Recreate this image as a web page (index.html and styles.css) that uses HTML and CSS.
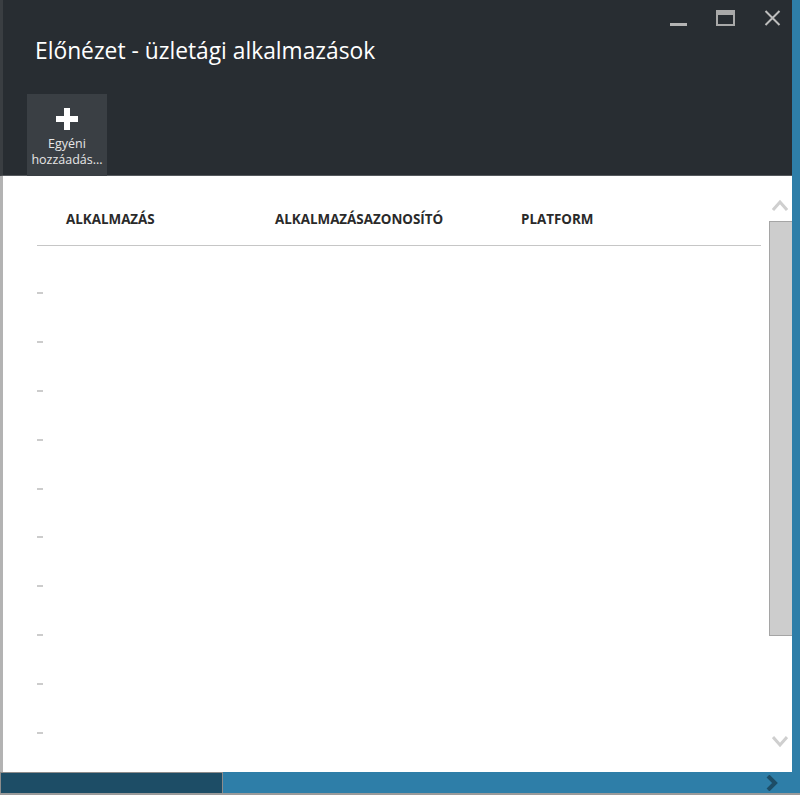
FILE: index.html
```html
<!DOCTYPE html>
<html lang="hu">
<head>
<meta charset="utf-8">
<title>Előnézet - üzletági alkalmazások</title>
<link rel="stylesheet" href="styles.css">
</head>
<body>
<div class="screen">
  <div class="main">
    <div class="window">
      <header class="header">
        <div class="controls">
          <span class="ctl ctl-min"></span>
          <span class="ctl ctl-max"></span>
          <svg class="ctl ctl-close" width="17" height="16" viewBox="0 0 17 16"><path d="M1.5 1 L15.5 15 M15.5 1 L1.5 15" stroke="#bdbdbd" stroke-width="2"/></svg>
        </div>
        <h1 class="title">Előnézet - üzletági alkalmazások</h1>
        <div class="toolbar">
          <button class="tool-btn">
            <svg class="plus" width="22" height="22" viewBox="0 0 22 22"><path d="M8 0h6v8h8v6h-8v8h-6v-8h-8v-6h8z" fill="#ffffff"/></svg>
            <span class="tool-label"><span class="line">Egyéni</span><span class="line">hozzáadás...</span></span>
          </button>
        </div>
      </header>
      <section class="content">
        <div class="table">
          <div class="thead">
            <div class="th th-app">ALKALMAZÁS</div>
            <div class="th th-id">ALKALMAZÁSAZONOSÍTÓ</div>
            <div class="th th-plat">PLATFORM</div>
          </div>
          <div class="rows">
            <div class="row"><span class="dash"></span></div>
            <div class="row"><span class="dash"></span></div>
            <div class="row"><span class="dash"></span></div>
            <div class="row"><span class="dash"></span></div>
            <div class="row"><span class="dash"></span></div>
            <div class="row"><span class="dash"></span></div>
            <div class="row"><span class="dash"></span></div>
            <div class="row"><span class="dash"></span></div>
            <div class="row"><span class="dash"></span></div>
            <div class="row"><span class="dash"></span></div>
          </div>
        </div>
        <div class="scrollbar">
          <svg class="arrow" width="16" height="12" viewBox="0 0 16 12"><path d="M1 11 L8 3 L15 11" fill="none" stroke="#cfcfcf" stroke-width="3"/></svg>
          <div class="thumb"></div>
          <svg class="arrow arrow-down" width="16" height="12" viewBox="0 0 16 12"><path d="M1 1 L8 9 L15 1" fill="none" stroke="#cfcfcf" stroke-width="3"/></svg>
        </div>
      </section>
    </div>
    <div class="side-blue"></div>
  </div>
  <footer class="taskbar">
    <div class="task-dark"></div>
    <div class="task-light">
      <svg class="next" width="12" height="16" viewBox="0 0 12 16"><path d="M2 1 L9 8 L2 15" fill="none" stroke="#1d4d66" stroke-width="4"/></svg>
    </div>
  </footer>
</div>
</body>
</html>
```
FILE: styles.css
```css
html, body {
  margin: 0;
  padding: 0;
}
body {
  width: 800px;
  height: 795px;
  overflow: hidden;
  background: #2e7ea8;
  font-family: "Open Sans", "Noto Sans", "Liberation Sans", sans-serif;
}
.screen {
  display: flex;
  flex-direction: column;
  width: 800px;
  height: 795px;
}
.main {
  display: flex;
  height: 772px;
}
.window {
  width: 792px;
  display: flex;
  flex-direction: column;
}
.side-blue {
  flex: 1;
  background: #2e7ea8;
}
.header {
  height: 176px;
  background: #282d32;
  border-left: 3px solid #3a3e42;
  border-bottom: 1px solid #55595d;
  position: relative;
  box-sizing: border-box;
  padding: 0 0 0 32px;
  display: flex;
  flex-direction: column;
}
.controls {
  position: absolute;
  top: 10px;
  right: 11px;
  display: flex;
  align-items: flex-start;
}
.ctl {
  display: block;
}
.ctl-min {
  width: 17px;
  height: 3px;
  background: #b4b4b4;
  margin-top: 13px;
  margin-right: 29px;
}
.ctl-max {
  width: 19px;
  height: 16px;
  box-sizing: border-box;
  border: 2px solid #a9a9a9;
  border-top-width: 5px;
  margin-right: 29px;
}
.title {
  margin: 35px 0 0 0;
  font-weight: 400;
  font-size: 22.8px;
  line-height: 32px;
  color: #ffffff;
}
.toolbar {
  margin-top: 27px;
  margin-left: -8px;
  display: flex;
}
.tool-btn {
  width: 80px;
  height: 82px;
  background: #3a3f44;
  border: 0;
  padding: 14px 0 0 0;
  margin: 0;
  display: flex;
  flex-direction: column;
  align-items: center;
  font-family: inherit;
  cursor: pointer;
}
.plus {
  display: block;
}
.tool-label {
  margin-top: 6px;
  display: flex;
  flex-direction: column;
  align-items: center;
  font-size: 12.5px;
  color: #e6e6e6;
}
.line {
  display: block;
  height: 16px;
  line-height: 16px;
  white-space: nowrap;
}
.content {
  flex: 1;
  background: #ffffff;
  border-left: 3px solid #b3b3b3;
  display: flex;
}
.table {
  width: 766px;
  box-sizing: border-box;
  padding-left: 34px;
  padding-top: 25px;
}
.thead {
  width: 724px;
  height: 45px;
  box-sizing: border-box;
  border-bottom: 1px solid #c6c6c6;
  padding-left: 29px;
  padding-top: 9px;
  display: flex;
}
.th {
  font-weight: 700;
  font-size: 13.4px;
  line-height: 18px;
  color: #2a2a2a;
}
.th-app { width: 209px; }
.th-id { width: 246px; }
.th-plat { flex: 1; }
.rows {
  display: flex;
  flex-direction: column;
}
.row {
  height: 48.9px;
  display: flex;
  align-items: flex-end;
}
.row:first-child {
  height: 48px;
}
.dash {
  display: block;
  width: 6px;
  height: 2px;
  background: #cccccc;
}
.scrollbar {
  width: 23px;
  display: flex;
  flex-direction: column;
  align-items: center;
  padding-top: 23px;
}
.arrow {
  display: block;
  margin-left: -2px;
}
.thumb {
  margin-top: 10px;
  width: 23px;
  height: 415px;
  box-sizing: border-box;
  background: #cdcdcd;
  border: 1px solid #a5a5a5;
  border-right: 0;
}
.arrow-down {
  margin-top: 100px;
}
.taskbar {
  height: 23px;
  display: flex;
  border-bottom: 2px solid #9a9a9a;
  box-sizing: border-box;
}
.task-dark {
  width: 223px;
  box-sizing: border-box;
  background: #1d4d66;
  border: 1px solid #8c8c8c;
  border-bottom: 0;
}
.task-light {
  flex: 1;
  background: #2e7ea8;
  display: flex;
  justify-content: flex-end;
  align-items: center;
  padding-right: 22px;
}
.next {
  display: block;
}
```
